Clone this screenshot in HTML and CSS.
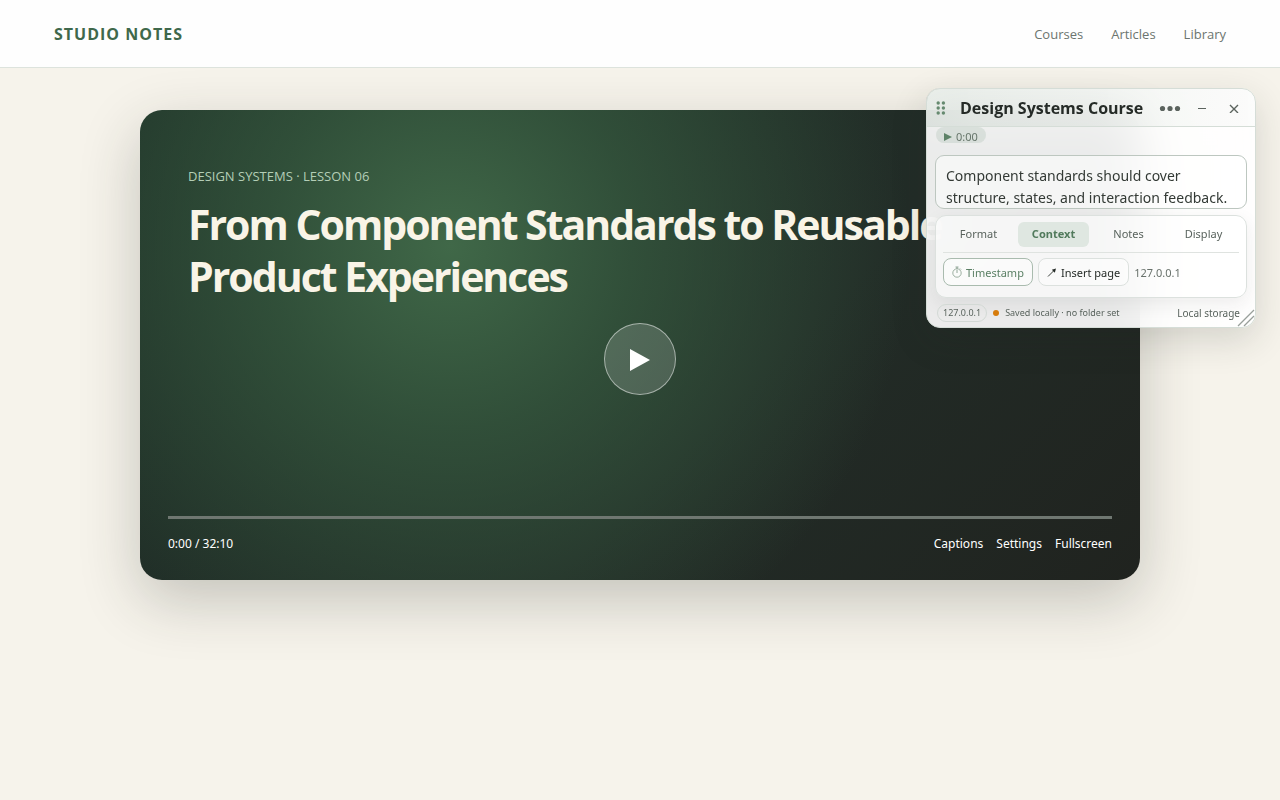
FILE: index.html
```html
<!DOCTYPE html>
<html lang="en">
<head>
<meta charset="utf-8">
<meta name="viewport" content="width=device-width, initial-scale=1">
<title>Studio Notes</title>
<link rel="stylesheet" href="styles.css">
</head>
<body>
<header class="site-header">
  <a class="brand" href="#">STUDIO NOTES</a>
  <nav class="site-nav">
    <a href="#courses">Courses</a>
    <a href="#articles">Articles</a>
    <a href="#library">Library</a>
  </nav>
</header>

<main class="stage">
  <section class="player">
    <div class="lesson">
      <p class="lesson-label">DESIGN SYSTEMS · LESSON 06</p>
      <h1 class="lesson-title">From Component Standards to Reusable Product Experiences</h1>
    </div>
    <button class="play" type="button" aria-label="Play">
      <svg width="22" height="24" viewBox="0 0 22 24"><path d="M1 2v22l20-11z" fill="#fff"/></svg>
    </button>
    <div class="controls">
      <div class="track"></div>
      <div class="control-row">
        <span>0:00 / 32:10</span>
        <div class="control-actions">
          <button type="button">Captions</button>
          <button type="button">Settings</button>
          <button type="button">Fullscreen</button>
        </div>
      </div>
    </div>
  </section>
</main>

<aside class="notes" aria-label="Notes">
  <header class="notes-header">
    <svg class="grip" width="10" height="14" viewBox="0 0 10 14" fill="#668a70"><circle cx="2.2" cy="2" r="1.7"/><circle cx="7.4" cy="2" r="1.7"/><circle cx="2.2" cy="7" r="1.7"/><circle cx="7.4" cy="7" r="1.7"/><circle cx="2.2" cy="12" r="1.7"/><circle cx="7.4" cy="12" r="1.7"/></svg>
    <h2 class="notes-title">Design Systems Course</h2>
    <div class="window-actions">
      <button type="button" aria-label="More"><svg width="22" height="8" viewBox="0 0 22 8" fill="#5b635e"><circle cx="3.5" cy="4.5" r="2.6"/><circle cx="11" cy="4.5" r="2.6"/><circle cx="18.5" cy="4.5" r="2.6"/></svg></button>
      <button type="button" aria-label="Minimize"><svg width="10" height="10" viewBox="0 0 10 10" stroke="#5b635e"><path d="M1 5.5h8"/></svg></button>
      <button class="close" type="button" aria-label="Close"><svg width="10" height="10" viewBox="0 0 10 10" stroke="#5b635e" stroke-width="1.4"><path d="M1 2l8 8M9 2l-8 8"/></svg></button>
    </div>
  </header>
  <div class="notes-body">
    <div class="stamp-row">
      <button class="stamp" type="button"><svg width="8" height="8" viewBox="0 0 8 8" fill="#5d8267"><path d="M0 0v8l8-4z"/></svg>0:00</button>
    </div>
    <textarea class="editor" aria-label="Note text">Component standards should cover structure, states, and interaction feedback.</textarea>
    <section class="tools">
      <div class="tabs" role="tablist">
        <button type="button" role="tab">Format</button>
        <button type="button" role="tab" class="active" aria-selected="true">Context</button>
        <button type="button" role="tab">Notes</button>
        <button type="button" role="tab">Display</button>
      </div>
      <div class="tool-row">
        <button class="tool accent" type="button"><svg width="10" height="12" viewBox="0 0 10 12" fill="none" stroke="#76927d"><circle cx="5" cy="7" r="4.2" stroke-width=".7"/><path d="M5 7V4M3.5 1h3M5 1v2M8 2.5l1 1" stroke-width=".8"/></svg>Timestamp</button>
        <button class="tool" type="button"><svg width="10" height="9" viewBox="0 0 10 9" fill="none" stroke="#252b27"><path d="M1 8.5L7.5 2" stroke-width=".9"/><path d="M9 .5L4.8 1.7l3 3z" fill="#252b27" stroke="none"/></svg>Insert page</button>
        <span class="host">127.0.0.1</span>
      </div>
    </section>
  </div>
  <footer class="notes-footer">
    <span class="host-pill">127.0.0.1</span>
    <span class="dot"></span>
    <span>Saved locally · no folder set</span>
    <span class="storage">Local storage</span>
  </footer>
  <svg class="resize" width="18" height="18" viewBox="0 0 18 18" stroke="#999f9b" stroke-width="1.3"><path d="M1 17L17 1M7 17L17 7M13 17l4-4"/></svg>
</aside>
</body>
</html>
```
FILE: styles.css
```css
* { box-sizing: border-box; }

body {
  margin: 0;
  min-height: 100vh;
  background: #f6f3eb;
  color: #252b27;
  font-family: "Noto Sans", "Open Sans", sans-serif;
}

button {
  margin: 0;
  padding: 0;
  border: 0;
  background: none;
  color: inherit;
  font: inherit;
}

a { color: inherit; text-decoration: none; }
svg { display: block; flex: none; }

.site-header {
  display: flex;
  align-items: center;
  justify-content: space-between;
  height: 68px;
  padding: 0 54px;
  border-bottom: 1px solid #dde3dd;
  background: #fefefe;
}

.brand {
  color: #3f684b;
  font: 700 16px/20px "Open Sans", sans-serif;
  letter-spacing: 1px;
}

.site-nav {
  display: flex;
  gap: 28px;
  color: #6c756f;
  font: 13px/20px "Open Sans", sans-serif;
}

.stage { padding: 42px 24px; }

.player {
  display: flex;
  flex-direction: column;
  position: relative;
  max-width: 1000px;
  min-height: 470px;
  margin: 0 auto;
  border-radius: 22px;
  background:
    radial-gradient(circle at 31% 29%, #406848, rgba(54, 90, 63, .75) 24%, rgba(45, 75, 54, 0) 60%),
    linear-gradient(135deg, #1e2f27, #222c27 60%, #20231f);
  box-shadow: 0 20px 60px rgba(37, 43, 34, .24);
}

.lesson { padding: 56px 48px 0; }

.lesson-label {
  margin: 0 0 12px;
  color: #b4ceb6;
  font: 13px/20px "Open Sans", sans-serif;
}

.lesson-title {
  max-width: 800px;
  margin: 0;
  color: #f9f4e7;
  font: 700 41px/52px "Open Sans", sans-serif;
  letter-spacing: -2px;
}

.play {
  display: grid;
  place-items: center;
  position: absolute;
  top: 50%;
  left: 50%;
  width: 72px;
  height: 72px;
  margin-top: 14px;
  border: 1px solid rgba(255, 255, 255, .5);
  border-radius: 50%;
  background: rgba(255, 255, 255, .16);
  transform: translate(-50%, -50%);
}

.controls {
  margin-top: auto;
  padding: 0 28px 26px;
  color: #fff;
  font: 12px/20px "Noto Sans", sans-serif;
}

.track { height: 3px; margin-bottom: 15px; background: #6f7771; }
.control-row { display: flex; justify-content: space-between; }
.control-actions { display: flex; gap: 13px; }

.notes {
  display: flex;
  flex-direction: column;
  position: absolute;
  top: 88px;
  right: 24px;
  width: 330px;
  overflow: hidden;
  border: 1px solid #d5ddd7;
  border-radius: 14px;
  background: rgba(255, 255, 255, .91);
  box-shadow: 0 12px 36px rgba(37, 43, 39, .16);
  backdrop-filter: blur(24px);
}

.notes-header {
  display: flex;
  align-items: center;
  height: 38px;
  padding: 0 16px 0 9px;
  border-bottom: 1px solid #d5ddd7;
  background: linear-gradient(90deg, rgba(95, 135, 105, .12), rgba(95, 135, 105, .02));
}

.notes-title {
  flex: 1;
  min-width: 0;
  overflow: hidden;
  margin: 0 15px 0 14px;
  font: 700 16px/24px "Open Sans", sans-serif;
  white-space: nowrap;
}

.window-actions { display: flex; align-items: center; gap: 16px; }
.close { margin-left: 6px; }

.notes-body { padding: 0 8px; }
.stamp-row { height: 28px; }

.stamp {
  display: flex;
  align-items: center;
  gap: 4px;
  height: 16px;
  margin-left: 1px;
  padding: 3px 8px 0;
  border-radius: 8px;
  background: rgba(95, 135, 105, .14);
  color: #66756a;
  font-size: 11px;
  line-height: 14px;
}

.editor {
  display: block;
  width: 100%;
  height: 54px;
  padding: 9px 10px 0;
  overflow: hidden;
  border: 1px solid #bdc7c0;
  border-radius: 9px;
  outline: 0;
  background: rgba(255, 255, 255, .5);
  color: #333a35;
  font: 14px/22px "Noto Sans", sans-serif;
  resize: none;
}

.tools {
  margin-top: 6px;
  padding: 6px 7px 11px;
  border: 1px solid #dce1de;
  border-radius: 11px;
  background: rgba(255, 255, 255, .55);
  box-shadow: 0 6px 18px rgba(37, 43, 39, .08);
}

.tabs {
  display: grid;
  grid-template-columns: repeat(4, 1fr);
  gap: 4px;
  padding-bottom: 5px;
  border-bottom: 1px solid #dfe3e0;
  color: #59635d;
  font-size: 11px;
}

.tabs button { height: 25px; padding-bottom: 1px; line-height: 24px; }

.tabs .active {
  border-radius: 6px;
  background: #dfe7e1;
  color: #517a5c;
  font-weight: 700;
}

.tool-row { display: flex; align-items: center; gap: 5px; padding-top: 5px; }

.tool {
  display: flex;
  align-items: center;
  gap: 4px;
  height: 28px;
  padding: 0 8px;
  border: 1px solid #dce1de;
  border-radius: 8px;
  background: rgba(255, 255, 255, .5);
  font-size: 11px;
  white-space: nowrap;
}

.tool.accent { border-color: #a9bbae; color: #5b8065; }
.host { color: #68716b; font-size: 11px; }

.notes-footer {
  display: flex;
  align-items: center;
  gap: 6px;
  height: 29px;
  padding: 0 15px 0 10px;
  color: #59635d;
  font-size: 9px;
  white-space: nowrap;
}

.host-pill {
  padding: 0 5px;
  border: 1px solid #d3d9d5;
  border-radius: 9px;
  line-height: 16px;
}

.dot { width: 6px; height: 6px; border-radius: 50%; background: #d67c0c; }
.storage { margin-left: auto; font-size: 10px; }
.resize { position: absolute; right: 0; bottom: 0; }
```
